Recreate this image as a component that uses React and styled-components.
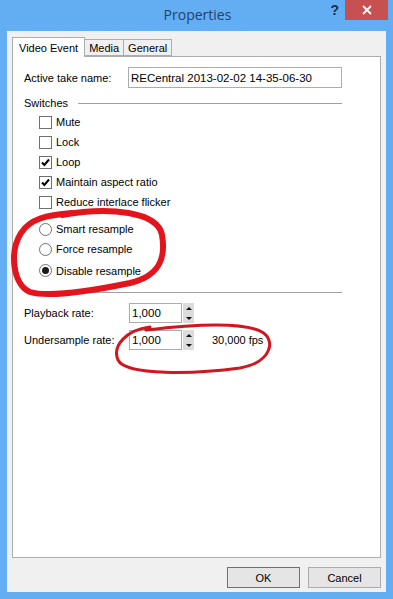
import styled, { createGlobalStyle } from "styled-components";

const GlobalStyle = createGlobalStyle`
  html, body {
    margin: 0;
    padding: 0;
  }
  body {
    font-family: "Liberation Sans", Arial, sans-serif;
    font-size: 11px;
    color: #000;
  }
`;

const switches = [
  { label: "Mute", checked: false },
  { label: "Lock", checked: false },
  { label: "Loop", checked: true },
  { label: "Maintain aspect ratio", checked: true },
  { label: "Reduce interlace flicker", checked: false },
];

const resampleModes = [
  { label: "Smart resample", selected: false },
  { label: "Force resample", selected: false },
  { label: "Disable resample", selected: true },
];

const App = () => {
  return (
    <>
      <GlobalStyle />
      <Window>
        <TitleBar>
          <Title>Properties</Title>
          <HelpButton>?</HelpButton>
          <CloseButton>
            <svg width="10" height="10" viewBox="0 0 10 10">
              <path d="M1 1 L9 9 M9 1 L1 9" stroke="#fff" strokeWidth="1.8" />
            </svg>
          </CloseButton>
        </TitleBar>
        <Client>
          <Tabs>
            <Tab $active>Video Event</Tab>
            <Tab>Media</Tab>
            <Tab>General</Tab>
          </Tabs>
          <Panel>
            <FieldRow>
              <Label>Active take name:</Label>
              <TextInput>RECentral 2013-02-02 14-35-06-30</TextInput>
            </FieldRow>
            <GroupHeading>
              <span>Switches</span>
              <Rule />
            </GroupHeading>
            <Options>
              {switches.map((item, i) => (
                <Option key={i}>
                  <CheckBox>
                    {item.checked && (
                      <svg width="11" height="11" viewBox="0 0 11 11">
                        <path
                          d="M2 5.5 L4.4 8 L9 2.5"
                          stroke="#000"
                          strokeWidth="2"
                          fill="none"
                        />
                      </svg>
                    )}
                  </CheckBox>
                  {item.label}
                </Option>
              ))}
            </Options>
            <Options $radio>
              {resampleModes.map((item, i) => (
                <Option key={i} $tall={i === 2}>
                  <Radio>{item.selected && <Dot />}</Radio>
                  {item.label}
                </Option>
              ))}
            </Options>
            <Separator />
            <RateRow $first>
              <RateLabel>Playback rate:</RateLabel>
              <Spin>
                <SpinInput>1,000</SpinInput>
                <SpinButtons>
                  <Arrow />
                  <Arrow $down />
                </SpinButtons>
              </Spin>
            </RateRow>
            <RateRow>
              <RateLabel>Undersample rate:</RateLabel>
              <Spin>
                <SpinInput>1,000</SpinInput>
                <SpinButtons>
                  <Arrow />
                  <Arrow $down />
                </SpinButtons>
              </Spin>
              <Fps>30,000 fps</Fps>
            </RateRow>
          </Panel>
          <ButtonBar>
            <Button $default>OK</Button>
            <Button>Cancel</Button>
          </ButtonBar>
        </Client>
        <Scribble viewBox="0 0 393 599" width="393" height="599">
          <path
            d="M62 215 C110 206 158 212 162 235 C166 258 160 276 130 283 C96 290 50 298 30 292 C13 285 9 252 21 233 C30 219 46 215 72 213"
            stroke="#e3141c"
            strokeWidth="6"
            fill="none"
            strokeLinecap="round"
          />
          <path
            d="M150 327 C126 330 112 346 118 360 C126 376 196 374 240 368 C272 362 276 340 262 332 C244 322 196 324 146 330"
            stroke="#d0161e"
            strokeWidth="3"
            fill="none"
            strokeLinecap="round"
          />
        </Scribble>
      </Window>
    </>
  );
};

const Window = styled.div`
  position: relative;
  width: 393px;
  height: 599px;
  box-sizing: border-box;
  background: #63adf3;
  padding: 0 7px 7px 7px;
  display: flex;
  flex-direction: column;
  overflow: hidden;
`;

const TitleBar = styled.div`
  height: 31px;
  flex: none;
  display: flex;
  align-items: flex-start;
  justify-content: center;
  position: relative;
`;

const Title = styled.div`
  font-family: "Open Sans", "Noto Sans", sans-serif;
  font-size: 14px;
  color: #22436a;
  line-height: 30px;
  padding-left: 2px;
`;

const HelpButton = styled.div`
  position: absolute;
  right: 47px;
  top: 2px;
  font-family: "Liberation Sans", sans-serif;
  font-weight: bold;
  font-size: 14px;
  color: #1d2f44;
`;

const CloseButton = styled.div`
  position: absolute;
  right: -2px;
  top: 0;
  width: 43px;
  height: 20px;
  background: #c75050;
  display: flex;
  align-items: center;
  justify-content: center;
`;

const Client = styled.div`
  flex: 1;
  background: #f0f0f0;
  padding: 6px 5px 0 5px;
  display: flex;
  flex-direction: column;
`;

const Tabs = styled.div`
  display: flex;
  align-items: flex-end;
  height: 19px;
  position: relative;
  z-index: 1;
`;

const Tab = styled.div`
  box-sizing: border-box;
  height: ${(p) => (p.$active ? "20px" : "17px")};
  margin-bottom: ${(p) => (p.$active ? "-1px" : "0")};
  padding: 0 ${(p) => (p.$active ? "6px" : "4px")};
  border: 1px solid #adadad;
  border-bottom: ${(p) => (p.$active ? "none" : "1px solid #adadad")};
  margin-right: -1px;
  background: ${(p) => (p.$active ? "#fff" : "#f0f0f0")};
  display: flex;
  align-items: center;
  padding-top: ${(p) => (p.$active ? "0" : "1px")};
`;

const Panel = styled.div`
  box-sizing: border-box;
  height: 502px;
  background: #fff;
  border: 1px solid #adadad;
  padding: 10px 38px 0 11px;
  display: flex;
  flex-direction: column;
`;

const FieldRow = styled.div`
  display: flex;
  align-items: center;
  height: 21px;
`;

const Label = styled.div`
  width: 104px;
`;

const TextInput = styled.div`
  flex: 1;
  box-sizing: border-box;
  height: 21px;
  border: 1px solid #acacac;
  padding: 0 2px;
  display: flex;
  align-items: center;
  font-size: 11.5px;
`;

const GroupHeading = styled.div`
  display: flex;
  align-items: center;
  gap: 10px;
  margin-top: 8px;
  height: 14px;
`;

const Rule = styled.div`
  flex: 1;
  height: 1px;
  background: #a0a0a0;
  margin-top: 1px;
`;

const Options = styled.div`
  display: flex;
  flex-direction: column;
  padding-left: 15px;
  margin-top: ${(p) => (p.$radio ? "7px" : "2px")};
`;

const Option = styled.div`
  display: flex;
  align-items: center;
  gap: 4px;
  height: ${(p) => (p.$tall ? "21px" : "20px")};
  margin-top: ${(p) => (p.$tall ? "1px" : "0")};
`;

const CheckBox = styled.div`
  box-sizing: border-box;
  width: 13px;
  height: 13px;
  border: 1px solid #707070;
  background: #fff;
  display: flex;
  align-items: center;
  justify-content: center;
`;

const Radio = styled.div`
  box-sizing: border-box;
  width: 13px;
  height: 13px;
  border-radius: 50%;
  border: 1px solid #707070;
  background: #fff;
  display: flex;
  align-items: center;
  justify-content: center;
`;

const Dot = styled.div`
  width: 7px;
  height: 7px;
  border-radius: 50%;
  background: #1a1a1a;
`;

const Separator = styled.div`
  height: 1px;
  background: #a0a0a0;
  margin-top: 11px;
  margin-left: 1px;
`;

const RateRow = styled.div`
  display: flex;
  align-items: center;
  height: 20px;
  margin-top: ${(p) => (p.$first ? "10px" : "7px")};
`;

const RateLabel = styled.div`
  width: 105px;
`;

const Spin = styled.div`
  display: flex;
  align-items: stretch;
  height: 20px;
`;

const SpinInput = styled.div`
  box-sizing: border-box;
  width: 53px;
  border: 1px solid #acacac;
  padding: 0 2px;
  display: flex;
  align-items: center;
  font-size: 11.5px;
`;

const SpinButtons = styled.div`
  width: 11px;
  margin-left: 1px;
  background: #dcdcdc;
  display: flex;
  flex-direction: column;
  justify-content: space-around;
  align-items: center;
`;

const Arrow = styled.div`
  width: 0;
  height: 0;
  border-left: 3px solid transparent;
  border-right: 3px solid transparent;
  ${(p) =>
    p.$down ? "border-top: 3px solid #111;" : "border-bottom: 3px solid #111;"}
`;

const Fps = styled.div`
  margin-left: 18px;
  display: flex;
  align-items: center;
`;

const ButtonBar = styled.div`
  display: flex;
  justify-content: flex-end;
  gap: 8px;
  margin-top: 9px;
`;

const Button = styled.div`
  box-sizing: border-box;
  width: 73px;
  height: 21px;
  border: 1px solid ${(p) => (p.$default ? "#3c7fb1" : "#acacac")};
  background: #e5e5e5;
  display: flex;
  align-items: center;
  justify-content: center;
`;

const Scribble = styled.svg`
  position: absolute;
  left: 0;
  top: 0;
  pointer-events: none;
`;

export default App;
